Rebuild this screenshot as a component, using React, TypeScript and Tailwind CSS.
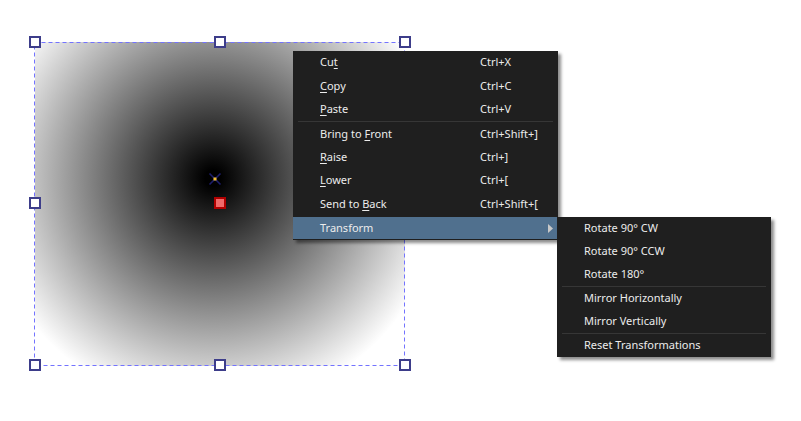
import React from "react";

const font = { fontFamily: '"Segoe UI", "Noto Sans", "Liberation Sans", sans-serif' };

function Label({ text, u }: { text: string; u?: number }) {
  if (u === undefined) return <>{text}</>;
  return (
    <>
      {text.slice(0, u)}
      <span className="underline underline-offset-2">{text[u]}</span>
      {text.slice(u + 1)}
    </>
  );
}

function Row({ text, u, sc }: { text: string; u?: number; sc?: string }) {
  return (
    <div className="flex h-[23.4px] items-center">
      <div className="w-[187px] pl-[27px]">
        <Label text={text} u={u} />
      </div>
      <div>{sc}</div>
    </div>
  );
}

function SubRow({ text }: { text: string }) {
  return <div className="flex h-[23px] items-center pl-[27px]">{text}</div>;
}

function Handle({ x, y }: { x: number; y: number }) {
  return (
    <div
      className="absolute h-[12px] w-[12px] border-[2.5px] border-[#3d3d8a] bg-white"
      style={{ left: x - 6, top: y - 6 }}
    />
  );
}

export default function App() {
  return (
    <div className="relative h-[421px] w-[801px] overflow-hidden bg-white" style={font}>
      {/* image on canvas */}
      <div
        className="absolute left-[35px] top-[42px] h-[324px] w-[370px]"
        style={{
          background:
            "radial-gradient(circle at 178px 136px, #000 0px, #000 8px, #fff 232px)",
        }}
      />
      <svg className="absolute left-0 top-0" width="801" height="421">
        <rect
          x="34.5"
          y="42.5"
          width="370"
          height="323"
          fill="none"
          stroke="#7373ff"
          strokeWidth="1"
          strokeDasharray="4 3"
        />
        <g stroke="#1c1c6a" strokeWidth="1.6">
          <line x1="209.5" y1="173.5" x2="220.5" y2="184.5" />
          <line x1="220.5" y1="173.5" x2="209.5" y2="184.5" />
        </g>
        <rect x="213.5" y="177.5" width="3" height="3" fill="#f5c030" />
        <rect x="215" y="198" width="10" height="10" fill="#f06a6a" stroke="#b00000" strokeWidth="2" />
      </svg>
      <Handle x={35} y={42} />
      <Handle x={220} y={42} />
      <Handle x={405} y={42} />
      <Handle x={35} y={203} />
      <Handle x={405} y={203} />
      <Handle x={35} y={365} />
      <Handle x={220} y={365} />
      <Handle x={405} y={365} />

      {/* context menu */}
      <div className="absolute left-[293px] top-[51px] flex w-[265px] flex-col bg-[#1f1f1f] text-[11px] text-[#ececec] shadow-[3px_3px_3px_rgba(0,0,0,0.45)]">
        <Row text="Cut" u={2} sc="Ctrl+X" />
        <Row text="Copy" u={0} sc="Ctrl+C" />
        <Row text="Paste" u={0} sc="Ctrl+V" />
        <div className="mx-[5px] h-px bg-[#363636]" />
        <Row text="Bring to Front" u={9} sc="Ctrl+Shift+]" />
        <Row text="Raise" u={0} sc="Ctrl+]" />
        <Row text="Lower" u={0} sc="Ctrl+[" />
        <Row text="Send to Back" u={8} sc="Ctrl+Shift+[" />
        <div className="mt-[1.6px] flex h-[22px] items-center justify-between bg-[#50708e] pl-[27px] pr-[5px]">
          <span>Transform</span>
          <svg width="5" height="9">
            <path d="M0 0 L5 4.5 L0 9 Z" fill="#c8c8c8" />
          </svg>
        </div>
        <div className="h-px" />
      </div>

      {/* submenu */}
      <div className="absolute left-[557px] top-[217px] flex w-[214px] flex-col bg-[#1f1f1f] text-[11px] text-[#ececec] shadow-[3px_3px_3px_rgba(0,0,0,0.45)]">
        <SubRow text="Rotate 90° CW" />
        <SubRow text="Rotate 90° CCW" />
        <SubRow text="Rotate 180°" />
        <div className="mx-[5px] h-px bg-[#363636]" />
        <SubRow text="Mirror Horizontally" />
        <SubRow text="Mirror Vertically" />
        <div className="mx-[5px] h-px bg-[#363636]" />
        <SubRow text="Reset Transformations" />
      </div>
    </div>
  );
}
